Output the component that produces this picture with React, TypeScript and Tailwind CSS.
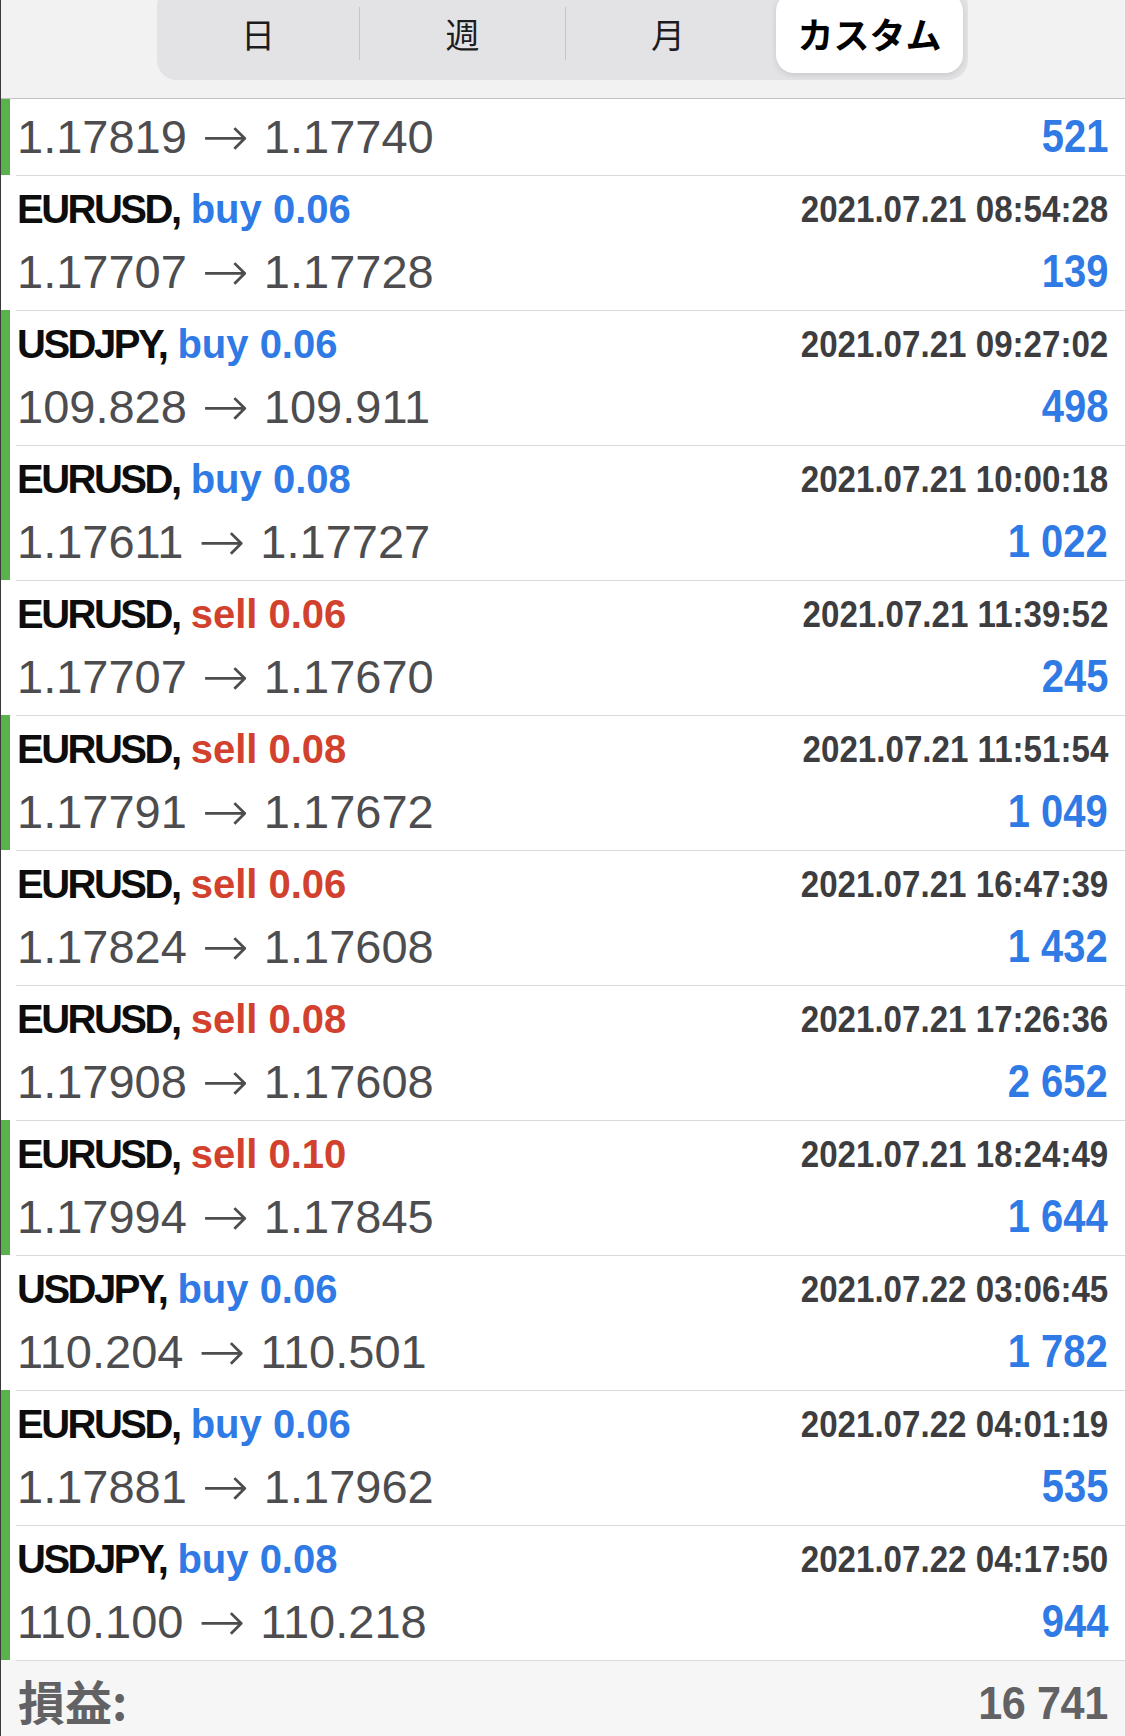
import React from "react";

type Trade = {
  symbol?: string;
  side?: "buy" | "sell";
  lot?: string;
  time?: string;
  open: string;
  close: string;
  profit: string;
  mark: boolean;
};

const trades: Trade[] = [
  { symbol: "EURUSD", side: "buy", lot: "0.06", time: "2021.07.21 08:54:28", open: "1.17707", close: "1.17728", profit: "139", mark: false },
  { symbol: "USDJPY", side: "buy", lot: "0.06", time: "2021.07.21 09:27:02", open: "109.828", close: "109.911", profit: "498", mark: true },
  { symbol: "EURUSD", side: "buy", lot: "0.08", time: "2021.07.21 10:00:18", open: "1.17611", close: "1.17727", profit: "1 022", mark: true },
  { symbol: "EURUSD", side: "sell", lot: "0.06", time: "2021.07.21 11:39:52", open: "1.17707", close: "1.17670", profit: "245", mark: false },
  { symbol: "EURUSD", side: "sell", lot: "0.08", time: "2021.07.21 11:51:54", open: "1.17791", close: "1.17672", profit: "1 049", mark: true },
  { symbol: "EURUSD", side: "sell", lot: "0.06", time: "2021.07.21 16:47:39", open: "1.17824", close: "1.17608", profit: "1 432", mark: false },
  { symbol: "EURUSD", side: "sell", lot: "0.08", time: "2021.07.21 17:26:36", open: "1.17908", close: "1.17608", profit: "2 652", mark: false },
  { symbol: "EURUSD", side: "sell", lot: "0.10", time: "2021.07.21 18:24:49", open: "1.17994", close: "1.17845", profit: "1 644", mark: true },
  { symbol: "USDJPY", side: "buy", lot: "0.06", time: "2021.07.22 03:06:45", open: "110.204", close: "110.501", profit: "1 782", mark: false },
  { symbol: "EURUSD", side: "buy", lot: "0.06", time: "2021.07.22 04:01:19", open: "1.17881", close: "1.17962", profit: "535", mark: true },
  { symbol: "USDJPY", side: "buy", lot: "0.08", time: "2021.07.22 04:17:50", open: "110.100", close: "110.218", profit: "944", mark: true },
];

function Marker({ on }: { on: boolean }) {
  return (
    <div className="flex w-[15px] shrink-0">
      <div className={on ? "w-[9px] bg-[#5bb14d]" : "w-[9px]"} />
    </div>
  );
}

function Prices({ t }: { t: Trade }) {
  return (
    <div className="flex h-[46px] items-center whitespace-nowrap text-[47px] leading-[46px] text-[#4d4d4f]">
      <span>{t.open}</span>
      <span className="mx-[15px] font-['DejaVu_Sans',sans-serif] text-[56px] font-extralight">→</span>
      <span>{t.close}</span>
    </div>
  );
}

function Profit({ value }: { value: string }) {
  return (
    <span className="inline-block origin-right scale-x-[0.85] whitespace-nowrap text-[47px] font-bold leading-[47px] text-[#2f7ae5]">
      {value}
    </span>
  );
}

function Row({ t }: { t: Trade }) {
  return (
    <div className="flex h-[135px]">
      <Marker on={t.mark} />
      <div className="flex flex-1 justify-between border-t border-[#dadada] pr-[17px]">
        <div className="flex flex-col pl-[1px] pt-[13px]">
          <div className="h-[40px] whitespace-nowrap text-[40px] font-bold leading-[40px]">
            <span className="tracking-[-2.5px] text-[#0d0d0d]">{t.symbol},</span>{" "}
            <span className={t.side === "buy" ? "text-[#2f7ae5]" : "text-[#d2412e]"}>
              {t.side} {t.lot}
            </span>
          </div>
          <div className="mt-[20px]">
            <Prices t={t} />
          </div>
        </div>
        <div className="flex flex-col items-end pt-[16px]">
          <span className="inline-block origin-right scale-x-[0.92] whitespace-nowrap text-[36px] font-bold leading-[36px] text-[#3d3d3f]">
            {t.time}
          </span>
          <div className="mt-[19px]">
            <Profit value={t.profit} />
          </div>
        </div>
      </div>
    </div>
  );
}

export default function App() {
  const first: Trade = { open: "1.17819", close: "1.17740", profit: "521", mark: true };

  return (
    <div className="h-[1736px] w-[1125px] overflow-hidden border-l border-[#3a3a3a] bg-white font-['Liberation_Sans','Noto_Sans_CJK_JP',sans-serif]">
      {/* period tabs */}
      <div className="h-[99px] overflow-hidden border-b border-[#c4c4c6] bg-[#f2f2f3]">
        <div className="-mt-[14px] ml-[156px] flex h-[94px] w-[811px] items-center rounded-[20px] bg-[#e3e3e6] font-['Noto_Sans_CJK_JP',sans-serif] text-[34px] text-[#1c1c1e]">
          <div className="flex h-full w-[202px] items-center justify-center">日</div>
          <div className="h-[53px] w-px bg-[#c6c6ca]" />
          <div className="flex h-full w-[205px] items-center justify-center">週</div>
          <div className="h-[53px] w-px bg-[#c6c6ca]" />
          <div className="flex h-full w-[204px] items-center justify-center">月</div>
          <div className="flex h-full flex-1 pb-[7px] pl-[6px] pr-[5px] pt-[7px]">
            <div className="flex flex-1 items-center justify-center rounded-[18px] bg-white text-[36px] font-bold text-black shadow-[0_2px_6px_rgba(0,0,0,0.12)]">
              カスタム
            </div>
          </div>
        </div>
      </div>

      {/* cut-off first row */}
      <div className="flex h-[76px]">
        <Marker on={first.mark} />
        <div className="flex flex-1 justify-between pr-[17px]">
          <div className="pl-[1px] pt-[15px]">
            <Prices t={first} />
          </div>
          <div className="pt-[13px]">
            <Profit value={first.profit} />
          </div>
        </div>
      </div>

      {trades.map((t, i) => (
        <Row key={i} t={t} />
      ))}

      {/* total */}
      <div className="flex h-[76px] bg-[#f6f6f7]">
        <div className="w-[15px] shrink-0" />
        <div className="flex flex-1 items-center justify-between border-t border-[#dadada] pl-[2px] pr-[17px] pt-[2px] font-bold text-[#626264]">
          <span className="font-['Noto_Sans_CJK_JP',sans-serif] text-[47px] leading-[50px]">損益:</span>
          <span className="inline-block origin-right scale-x-[0.92] pt-[6px] text-[47px] leading-[50px] tracking-[-0.5px]">16 741</span>
        </div>
      </div>
    </div>
  );
}
